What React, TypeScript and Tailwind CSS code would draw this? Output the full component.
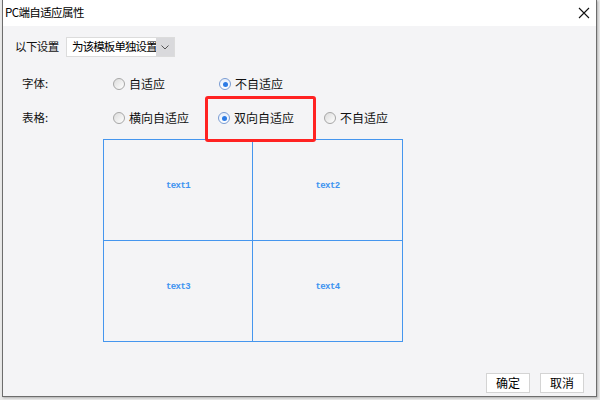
import React from "react";

function Radio({ checked, label, width }: { checked?: boolean; label: string; width?: string }) {
  return (
    <div className={`flex items-center ${width ?? ""}`}>
      <span
        className={`relative w-[12px] h-[12px] rounded-full border flex items-center justify-center ${
          checked ? "border-[#7a9cd3] bg-gradient-to-b from-[#e6eefb] to-white" : "border-[#a6a6a6] bg-gradient-to-br from-[#dcdcdc] to-white"
        }`}
      >
        {checked && <span className="w-[5px] h-[5px] rounded-full bg-[#2c7be5]" />}
      </span>
      <span className="ml-[4px] text-[12px] leading-none text-[#111] whitespace-nowrap">{label}</span>
    </div>
  );
}

export default function App() {
  return (
    <div className="relative w-[600px] h-[400px] bg-[#e9e9e9] overflow-hidden font-['Noto_Sans_CJK_SC',sans-serif]">
      <div className="ml-[2px] w-[595px] h-[397px] border-x border-b border-[#6d6d6d] bg-[#f4f4f6] flex flex-col shadow-[1px_1px_2px_rgba(0,0,0,0.25)]">
        {/* title bar */}
        <div className="h-[26px] bg-white flex items-center justify-between pl-[2px] pr-[6px] shrink-0">
          <span className="text-[11.5px] tracking-[-0.6px] leading-none text-black whitespace-nowrap">PC端自适应属性</span>
          <svg width="12" height="12" viewBox="0 0 12 12" className="block">
            <path d="M1 1 L11 11 M11 1 L1 11" stroke="#111" strokeWidth="1.1" />
          </svg>
        </div>
        {/* body */}
        <div className="flex-1 flex flex-col">
          <div className="mt-[11px] h-[20px] flex items-center pl-[12px]">
            <span className="w-[51px] text-[11.5px] tracking-[-0.6px] leading-none text-[#111] whitespace-nowrap">以下设置</span>
            <div className="h-[20px] w-[109px] flex bg-white border border-[#dcdcdc]">
              <span className="flex-1 flex items-center pl-[5px] text-[11.5px] tracking-[-0.9px] leading-none text-black whitespace-nowrap overflow-hidden">
                为该模板单独设置
              </span>
              <span className="w-[18px] shrink-0 bg-[#d9d9dc] flex items-center justify-center">
                <svg width="8" height="5" viewBox="0 0 8 5">
                  <path d="M0.5 0.5 L4 4 L7.5 0.5" fill="none" stroke="#555" strokeWidth="1" />
                </svg>
              </span>
            </div>
          </div>
          <div className="mt-[17px] h-[20px] flex items-center pl-[19px]">
            <span className="w-[91px] text-[11.5px] leading-none text-[#111]">字体:</span>
            <Radio label="自适应" width="w-[106px]" />
            <Radio label="不自适应" checked />
          </div>
          <div className="mt-[14px] h-[20px] flex items-center pl-[19px]">
            <span className="w-[91px] text-[11.5px] leading-none text-[#111]">表格:</span>
            <Radio label="横向自适应" width="w-[105px]" />
            <Radio label="双向自适应" checked width="w-[106px]" />
            <Radio label="不自适应" />
          </div>
          <div className="mt-[11px] ml-[100px] w-[300px] h-[203px] border border-[#4596ee] grid grid-cols-2 grid-rows-2">
            {["text1", "text2", "text3", "text4"].map((t, i) => (
              <div
                key={t}
                className={`flex items-center justify-center pb-[6px] ${i % 2 === 0 ? "border-r border-[#4596ee]" : ""} ${
                  i < 2 ? "border-b border-[#4596ee]" : ""
                }`}
              >
                <span className="font-['Liberation_Mono',monospace] font-bold text-[9px] tracking-[-0.6px] leading-none text-[#3d93f0]">{t}</span>
              </div>
            ))}
          </div>
          <div className="mt-auto mb-[3px] flex justify-end gap-[10px] pr-[12px]">
            <button className="w-[44px] h-[20px] bg-white border border-[#d4d4d4] text-[12px] leading-none text-black">确定</button>
            <button className="w-[44px] h-[20px] bg-white border border-[#d4d4d4] text-[12px] leading-none text-black">取消</button>
          </div>
        </div>
      </div>
      <div className="absolute left-[205px] top-[96px] w-[111px] h-[46px] border-[3px] border-[#ff2222] rounded-[3px]" />
    </div>
  );
}
